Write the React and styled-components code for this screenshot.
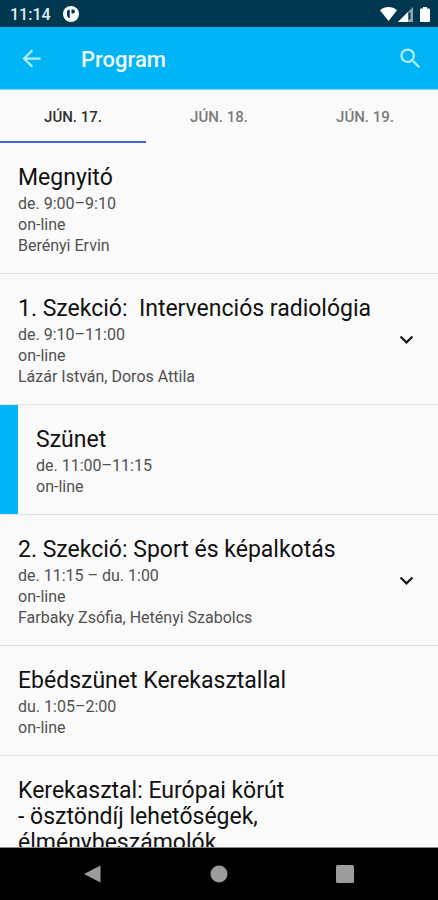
import React, { useState } from "react";
import styled, { createGlobalStyle } from "styled-components";
import { MdArrowBack, MdKeyboardArrowDown, MdSearch } from "react-icons/md";

const GlobalStyle = createGlobalStyle`
  * {
    box-sizing: border-box;
  }
  body {
    margin: 0;
    font-family: Roboto, "Liberation Sans", sans-serif;
    background: #fafafa;
  }
  button {
    font-family: inherit;
    border: 0;
    padding: 0;
    background: none;
    cursor: pointer;
  }
`;

const Screen = styled.div`
  display: flex;
  flex-direction: column;
  height: 100vh;
`;

const StatusBar = styled.div`
  display: flex;
  flex: none;
  align-items: center;
  justify-content: space-between;
  height: 27px;
  padding: 1px 8px 0 10px;
  background: #00384f;
  color: #e4eef2;
  font-size: 16px;
  font-weight: 500;
`;

const StatusGroup = styled.div`
  display: flex;
  align-items: center;
  gap: ${(props) => props.$gap}px;
`;

const AppBar = styled.header`
  display: flex;
  flex: none;
  align-items: center;
  height: 63px;
  padding: 0 14px 0 18px;
  background: #00b4f5;
  border-bottom: 1px solid #7fd6f7;
`;

const AppTitle = styled.h1`
  flex: 1;
  margin: 0 0 0 36px;
  padding-top: 4px;
  color: #f2fbff;
  font-size: 22px;
  line-height: 26px;
  font-weight: 500;
`;

const IconButton = styled.button`
  display: flex;
  color: ${(props) => props.$color};
  font-size: 27px;
`;

const Tabs = styled.div`
  display: flex;
  flex: none;
  height: 53px;
`;

const Tab = styled.button`
  flex: 1;
  color: ${(props) => (props.$active ? "#303030" : "#7a7a7a")};
  border-top: 2px solid transparent;
  border-bottom: 2px solid ${(props) => (props.$active ? "#4a62d8" : "transparent")};
  font-size: 15px;
  font-weight: 500;
`;

const List = styled.main`
  flex: 1;
  min-height: 0;
  overflow-y: auto;
  scrollbar-width: none;
`;

const Row = styled.article`
  display: flex;
  align-items: center;
  padding-right: 18px;
  border-bottom: 1px solid #e2e2e2;
`;

const Stripe = styled.div`
  align-self: stretch;
  width: 18px;
  background: #00b4f5;
`;

const RowBody = styled.div`
  flex: 1;
  padding: 22px 0 17px 18px;
`;

const RowTitle = styled.h2`
  margin: 0 0 2px;
  color: #111;
  font-size: 23px;
  line-height: 26px;
  font-weight: 400;
  white-space: pre-wrap;
`;

const Meta = styled.p`
  margin: 0;
  color: #505050;
  font-size: 16px;
  line-height: 21px;
`;

const NavBar = styled.nav`
  display: flex;
  flex: none;
  align-items: center;
  justify-content: center;
  gap: 98px;
  height: 53px;
  background: #000;
  border-top: 1px solid #8a8a8a;
`;

const NavButton = styled.button`
  display: flex;
  color: #9c9c9c;
`;

const days = ["JÚN. 17.", "JÚN. 18.", "JÚN. 19."];

const sessions = [
  { title: "Megnyitó", details: ["de. 9:00–9:10", "on-line", "Berényi Ervin"] },
  {
    title: "1. Szekció:  Intervenciós radiológia",
    details: ["de. 9:10–11:00", "on-line", "Lázár István, Doros Attila"],
    expandable: true,
  },
  { title: "Szünet", details: ["de. 11:00–11:15", "on-line"], highlight: true },
  {
    title: "2. Szekció: Sport és képalkotás",
    details: ["de. 11:15 – du. 1:00", "on-line", "Farbaky Zsófia, Hetényi Szabolcs"],
    expandable: true,
  },
  { title: "Ebédszünet Kerekasztallal", details: ["du. 1:05–2:00", "on-line"] },
  {
    title: "Kerekasztal: Európai körút\n- ösztöndíj lehetőségek,\nélménybeszámolók",
    details: [],
  },
];

const NotificationIcon = () => (
  <svg width="16" height="16" viewBox="0 0 16 16">
    <circle cx="8" cy="8" r="8" fill="#fff" />
    <path d="M4 5Q5 3.500 6.800 3.500V12Q4 11.500 4 9z" fill="#00384f" />
    <path d="M8.500 3.500h1.500a2 2 0 0 1 0 4H8.500z" fill="#00384f" />
  </svg>
);

const WifiIcon = () => (
  <svg width="17" height="14" viewBox="0 0 17 14">
    <path d="M0 3.200C5-1 12-1 17 3.200L8.500 14z" fill="#fff" />
  </svg>
);

const SignalIcon = () => (
  <svg width="15" height="15" viewBox="0 0 15 15">
    <path d="M15 0v15H0z" fill="#8fa5af" />
    <path d="M10 5v10H0z" fill="#fff" />
    <path d="M10.500 5.500h2v7h-2z" fill="#00384f" />
  </svg>
);

const BatteryIcon = () => (
  <svg width="10" height="15" viewBox="0 0 10 15">
    <path
      d="M3 0h4v1.500h2a1 1 0 0 1 1 1V14a1 1 0 0 1-1 1H1a1 1 0 0 1-1-1V2.500a1 1 0 0 1 1-1h2z"
      fill="#fff"
    />
  </svg>
);

const Session = ({ title, details, highlight, expandable }) => (
  <Row>
    {highlight && <Stripe />}
    <RowBody>
      <RowTitle>{title}</RowTitle>
      {details.map((line) => (
        <Meta key={line}>{line}</Meta>
      ))}
    </RowBody>
    {expandable && (
      <IconButton $color="#1c1c1c" aria-label={title}>
        <MdKeyboardArrowDown />
      </IconButton>
    )}
  </Row>
);

const App = () => {
  const [day, setDay] = useState(0);

  return (
    <Screen>
      <GlobalStyle />
      <StatusBar>
        <StatusGroup $gap={12}>
          <span>11:14</span>
          <NotificationIcon />
        </StatusGroup>
        <StatusGroup $gap={1}>
          <WifiIcon />
          <StatusGroup $gap={7}>
            <SignalIcon />
            <BatteryIcon />
          </StatusGroup>
        </StatusGroup>
      </StatusBar>
      <AppBar>
        <IconButton $color="#b5ebff" aria-label="Vissza">
          <MdArrowBack />
        </IconButton>
        <AppTitle>Program</AppTitle>
        <IconButton $color="#b5ebff" aria-label="Keresés">
          <MdSearch />
        </IconButton>
      </AppBar>
      <Tabs role="tablist">
        {days.map((label, i) => (
          <Tab
            key={label}
            role="tab"
            aria-selected={i === day}
            $active={i === day}
            onClick={() => setDay(i)}
          >
            {label}
          </Tab>
        ))}
      </Tabs>
      <List>
        {sessions.map((session) => (
          <Session key={session.title} {...session} />
        ))}
      </List>
      <NavBar>
        <NavButton aria-label="Vissza">
          <svg width="28" height="18" viewBox="0 0 28 18">
            <path d="M5 9 21.500.5v17z" fill="currentColor" />
          </svg>
        </NavButton>
        <NavButton aria-label="Kezdőlap">
          <svg width="28" height="18" viewBox="0 0 28 18">
            <circle cx="14" cy="9" r="8.500" fill="currentColor" />
          </svg>
        </NavButton>
        <NavButton aria-label="Áttekintés">
          <svg width="28" height="18" viewBox="0 0 28 18">
            <rect x="5" y="0" width="18" height="18" rx="1.500" fill="currentColor" />
          </svg>
        </NavButton>
      </NavBar>
    </Screen>
  );
};

export default App;
